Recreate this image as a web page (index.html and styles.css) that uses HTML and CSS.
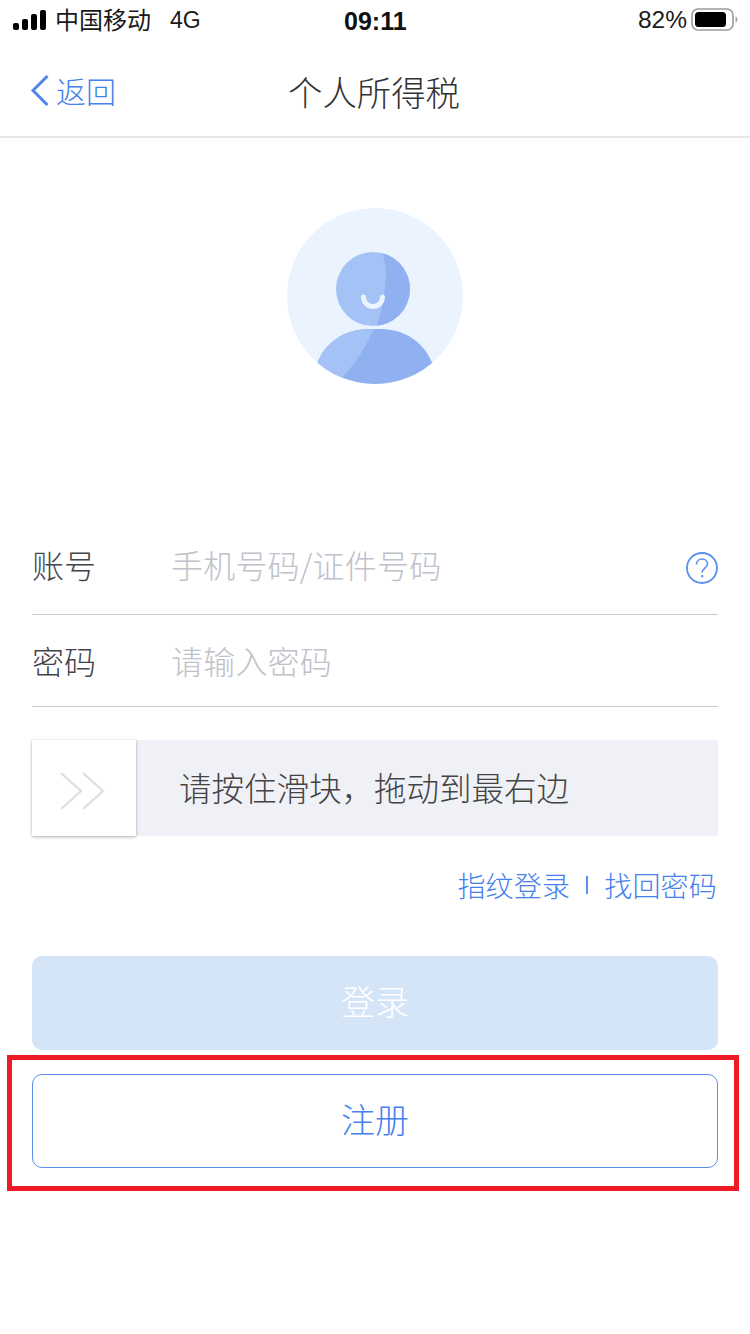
FILE: index.html
```html
<!DOCTYPE html>
<html lang="zh-CN">
<head>
<meta charset="utf-8">
<title>个人所得税</title>
<link rel="stylesheet" href="styles.css">
</head>
<body>
<div class="page">
  <div class="status">
    <div class="status-left">
      <svg class="signal" width="34" height="20" viewBox="0 0 34 20"><rect x="0" y="13" width="6" height="7" rx="2"/><rect x="9" y="9" width="6" height="11" rx="2"/><rect x="18" y="4" width="6" height="16" rx="2"/><rect x="27" y="0" width="6" height="20" rx="2"/></svg>
      <span class="carrier">中国移动</span>
      <span class="net">4G</span>
    </div>
    <div class="time">09:11</div>
    <div class="status-right">
      <span class="pct">82%</span>
      <svg class="battery" width="48" height="24" viewBox="0 0 48 24"><rect x="1" y="1" width="41" height="21" rx="6" fill="none" stroke="#9a9a9a" stroke-width="1.6"/><rect x="4" y="4" width="31" height="15" rx="3.5" fill="#000"/><path d="M44.500 8.500c1.600.6 2 1.800 2 3s-.4 2.400-2 3z" fill="#a5a5a5"/></svg>
    </div>
  </div>
  <header class="nav">
    <div class="back">
      <svg class="chev" width="20" height="32" viewBox="0 0 20 32"><path d="M17.500 2 3 16.500 17.500 31" fill="none" stroke="#4f86ec" stroke-width="3"/></svg>
      <span>返回</span>
    </div>
    <div class="title">个人所得税</div>
  </header>
  <div class="avatar-wrap">
    <svg class="avatar" width="176" height="176" viewBox="0 0 176 176">
      <defs><clipPath id="disc"><circle cx="88" cy="88" r="88"/></clipPath>
      <clipPath id="head"><circle cx="86" cy="81" r="37"/></clipPath></defs>
      <circle cx="88" cy="88" r="88" fill="#ebf4fe"/>
      <circle cx="86" cy="81" r="37" fill="#a5c2f6"/>
      <path clip-path="url(#head)" d="M94 42c5 12 6 24 4 36-1 14-4 28-9 42h40V42z" fill="#8fb1f2"/>
      <path d="M76.500 89a9.500 9.500 0 0 0 19 0" fill="none" stroke="#ebf4fe" stroke-width="5" stroke-linecap="round"/>
      <g clip-path="url(#disc)">
        <path d="M30 156c7-20 26-35 52-35h12c24 0 44 14 52 36v25H30z" fill="#8fb1f2"/>
        <path d="M30 156c7-20 26-35 52-35h5c-9 19-19 35-32 49-10-4-18-9-25-14z" fill="#a5c2f6"/>
      </g>
    </svg>
  </div>
  <form class="form">
    <div class="field field-account">
      <span class="label">账号</span>
      <span class="placeholder">手机号码/证件号码</span>
      <svg class="help" width="34" height="34" viewBox="0 0 34 34"><circle cx="17" cy="17" r="15" fill="none" stroke="#5b8fee" stroke-width="1.800"/><path d="M11.500 13.500c0-3.200 2.400-5.500 5.500-5.500s5.500 2.200 5.500 5c0 3.900-5.200 4-5.200 8.500" fill="none" stroke="#5b8fee" stroke-width="1.600"/><rect x="16.300" y="24" width="1.900" height="2.400" fill="#5b8fee"/></svg>
    </div>
    <div class="field field-password">
      <span class="label">密码</span>
      <span class="placeholder">请输入密码</span>
    </div>
    <div class="slider">
      <div class="handle">
        <svg width="46" height="38" viewBox="0 0 46 38"><path d="M1 1l20 18L1 37M23 1l20 18L23 37" fill="none" stroke="#dedede" stroke-width="2.200"/></svg>
      </div>
      <span class="slider-text">请按住滑块，拖动到最右边</span>
    </div>
    <div class="links">
      <span>指纹登录</span><i class="sep"></i><span>找回密码</span>
    </div>
    <div class="btn btn-login">登录</div>
    <div class="btn btn-register">注册</div>
  </form>
  <div class="highlight"></div>
</div>
</body>
</html>
```
FILE: styles.css
```css
* { box-sizing: border-box; }
html, body { margin: 0; padding: 0; background: #fff; }
body { font-family: "Liberation Sans", "Noto Sans CJK SC", sans-serif; }
.page { position: relative; width: 750px; height: 1334px; overflow: hidden; background: #fff; }

.status { height: 40px; display: flex; align-items: center; justify-content: space-between; position: relative; padding: 0 13px; color: #1a1a1a; }
.status-left { display: flex; align-items: center; }
.signal { margin-top: -1px; fill: #000; }
.carrier { margin-left: 8px; font-family: "Noto Sans CJK SC", sans-serif; font-size: 24px; line-height: 38px; height: 40px; }
.net { margin-left: 19px; font-size: 23px; line-height: 42px; }
.time { position: absolute; left: 344px; top: 0; line-height: 42px; font-size: 25px; font-weight: 700; color: #111; }
.status-right { display: flex; align-items: center; gap: 4px; margin-right: -2px; }
.pct { font-size: 24.500px; line-height: 42px; }

.nav { height: 98px; border-bottom: 2px solid #e6e6ea; display: flex; align-items: center; position: relative; padding-left: 30px; padding-top: 4px; }
.back { display: flex; align-items: center; gap: 6px; color: #4480ee; font-family: "Noto Sans CJK SC", sans-serif; font-size: 30px; font-weight: 300; }
.title { position: absolute; left: 0; right: 0; top: 31px; text-align: center; font-family: "Noto Sans CJK SC", sans-serif; font-size: 34.400px; font-weight: 300; line-height: 40px; color: #333; padding-right: 2px; }

.avatar-wrap { display: flex; justify-content: center; padding-top: 70px; }
.avatar { display: block; }

.form { padding: 0 32px; font-family: "Noto Sans CJK SC", sans-serif; }
.field { display: flex; align-items: center; border-bottom: 1px solid #c8c8cd; position: relative; }
.field-account { margin-top: 136px; height: 95px; padding-bottom: 6px; }
.field-password { height: 92px; padding-bottom: 2px; }
.label { width: 140px; font-size: 32px; font-weight: 300; color: #44444c; }
.placeholder { font-size: 32px; font-weight: 300; color: #c0c1ca; letter-spacing: .2px; margin-left: -1px; }
.help { position: absolute; right: -1px; top: 31px; }

.slider { margin-top: 33px; height: 96px; background: #f0f1f6; display: flex; align-items: center; }
.handle { width: 104px; height: 96px; background: #fff; box-shadow: 0 1px 3px rgba(0,0,0,.32); display: flex; align-items: center; justify-content: center; padding-top: 5px; padding-right: 2px; }
.slider-text { margin-left: 43px; padding-bottom: 4px; font-size: 32.500px; font-weight: 300; color: #444; }

.links { display: flex; justify-content: flex-end; align-items: center; height: 102px; padding-bottom: 4px; color: #4480ee; font-size: 28px; font-weight: 300; padding-right: 1px; }
.links span { letter-spacing: .2px; }
.sep { width: 2px; height: 18px; background: #5b8fee; margin: 0 16px; }

.btn { height: 94px; border-radius: 10px; display: flex; align-items: center; justify-content: center; padding-bottom: 5px; font-size: 34px; font-weight: 300; }
.btn-login { margin-top: 18px; background: #d4e5f8; color: #fff; }
.btn-register { margin-top: 24px; background: #fff; border: 1px solid #5b8fee; color: #4480ee; }

.highlight { position: absolute; left: 7px; top: 1055px; width: 732px; height: 136px; border: 5px solid #ed1c24; pointer-events: none; }
```
